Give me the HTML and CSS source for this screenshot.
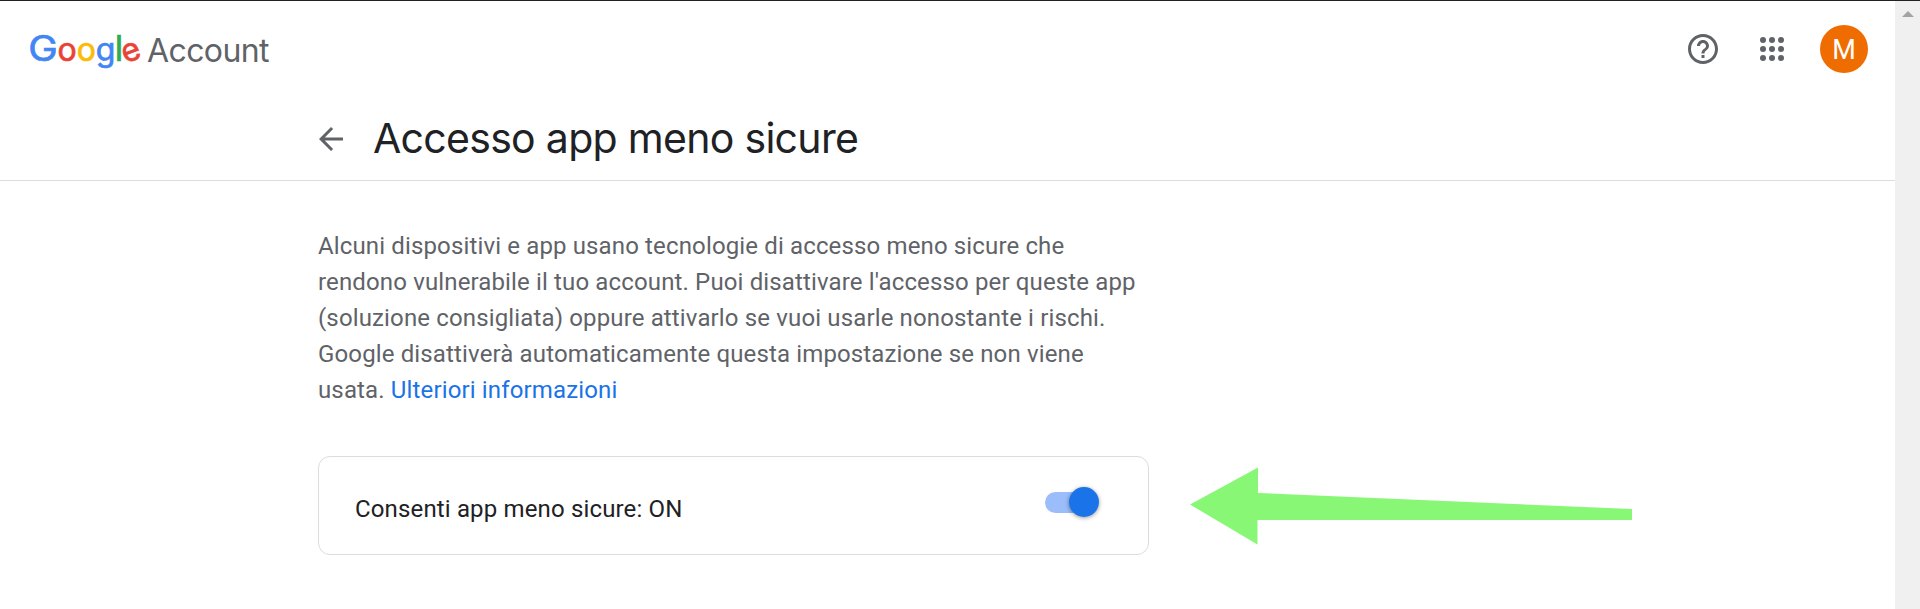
FILE: index.html
```html
<!DOCTYPE html>
<html lang="it">
<head>
<meta charset="utf-8">
<title>Accesso app meno sicure</title>
<link rel="stylesheet" href="styles.css">
</head>
<body>
<div class="window">
  <div class="page">
    <header class="header">
      <div class="topbar">
        <div class="brand">
          <svg class="logo" viewBox="0 0 112 50" role="img" aria-label="Google">
            <text class="blue capital" x="-1.7" y="36.500" textLength="29.500" lengthAdjust="spacingAndGlyphs">G</text>
            <text class="red" x="27.500" y="36.500">o</text>
            <text class="yellow" x="46.700" y="36.500">o</text>
            <text class="blue" x="65.700" y="36.500">g</text>
            <text class="green capital" x="84.700" y="36.500">l</text>
            <text class="red" x="91.500" y="36.500" transform="rotate(-20 101.500 27.500)">e</text>
          </svg>
          <span class="product">Account</span>
        </div>
        <div class="actions">
          <svg class="help" viewBox="0 0 24 24"><path d="M11 18h2v-2h-2v2zm1-16C6.480 2 2 6.480 2 12s4.480 10 10 10 10-4.480 10-10S17.520 2 12 2zm0 18c-4.410 0-8-3.590-8-8s3.590-8 8-8 8 3.590 8 8-3.590 8-8 8zm0-14c-2.210 0-4 1.790-4 4h2c0-1.100.9-2 2-2s2 .9 2 2c0 2-3 1.750-3 5h2c0-2.250 3-2.500 3-5 0-2.210-1.790-4-4-4z"/></svg>
          <svg class="apps" viewBox="0 0 24 24"><circle cx="3" cy="3" r="3"/><circle cx="12" cy="3" r="3"/><circle cx="21" cy="3" r="3"/><circle cx="3" cy="12" r="3"/><circle cx="12" cy="12" r="3"/><circle cx="21" cy="12" r="3"/><circle cx="3" cy="21" r="3"/><circle cx="12" cy="21" r="3"/><circle cx="21" cy="21" r="3"/></svg>
          <span class="avatar">M</span>
        </div>
      </div>
      <div class="titlebar">
        <svg class="back" viewBox="0 0 24 24"><path d="M20 11H7.830l5.590-5.590L12 4l-8 8 8 8 1.410-1.410L7.830 13H20v-2z"/></svg>
        <h1 class="title">Accesso app meno sicure</h1>
      </div>
    </header>
    <main class="content">
      <p class="description">Alcuni dispositivi e app usano tecnologie di accesso meno sicure che<br>rendono vulnerabile il tuo account. Puoi disattivare l'accesso per queste app<br>(soluzione consigliata) oppure attivarlo se vuoi usarle nonostante i rischi.<br>Google disattiverà automaticamente questa impostazione se non viene<br>usata. <a class="link">Ulteriori informazioni</a></p>
      <div class="row">
        <div class="card">
          <span class="label">Consenti app meno sicure: ON</span>
          <span class="switch"><span class="thumb"></span></span>
        </div>
        <svg class="arrow" viewBox="0 0 442 78"><path d="M0 37.500 68 0.500V26L442 42v11H67.500V77.500z"/></svg>
      </div>
    </main>
  </div>
  <div class="scrollbar"><span class="scroll-up"></span></div>
</div>
</body>
</html>
```
FILE: styles.css
```css
* { box-sizing: border-box; }
body { margin: 0; background: #fff; font-family: Roboto, sans-serif; overflow: hidden; }
.window { display: flex; height: 609px; border-top: 1px solid #202124; }
.page { flex: 1; }
.scrollbar { width: 25px; background: #f0f0f0; display: flex; justify-content: center; padding-top: 10px; }
.scroll-up { width: 0; height: 0; border: 6px solid transparent; border-top: 0; border-bottom-color: #a3a3a3; }

.header { height: 180px; border-bottom: 1px solid #dadce0; }
.topbar { height: 96px; display: flex; justify-content: space-between; align-items: center; padding: 0 27px 0 30px; }
.brand { display: flex; align-items: center; gap: 5px; }
.logo { width: 112px; height: 50px; overflow: visible; font: 32px Inter, sans-serif; }
.logo text { stroke-width: 0.7; }
.logo .capital { font-size: 35px; }
.blue { fill: #4285f4; stroke: #4285f4; }
.red { fill: #ea4335; stroke: #ea4335; }
.yellow { fill: #fbbc05; stroke: #fbbc05; }
.green { fill: #34a853; stroke: #34a853; }
.product { font: 32px/50px Inter, sans-serif; color: #5f6368; padding-top: 4px; letter-spacing: -0.6px; }
.actions { display: flex; align-items: center; }
.help { width: 36px; height: 36px; fill: #5f6368; margin-right: 39px; }
.apps { width: 24px; height: 24px; fill: #5f6368; margin-right: 36px; }
.avatar { width: 48px; height: 48px; border-radius: 50%; background: #ef6c00; color: #fff; font-size: 27px; line-height: 50px; text-align: center; }

.titlebar { display: flex; align-items: center; height: 83px; padding: 0 0 0 313px; gap: 24px; }
.back { width: 36px; height: 36px; fill: #5f6368; }
.title { margin: 0 0 2px; font: 400 41px/60px Inter, sans-serif; color: #202124; letter-spacing: -0.7px; }

.content { padding: 47px 0 0 318px; }
.description { margin: 0 0 48px; font-size: 24px; line-height: 36px; color: #5f6368; letter-spacing: 0.14px; }
.link { color: #1a73e8; }
.row { display: flex; align-items: flex-start; gap: 42px; }
.card { width: 831px; height: 99px; border: 1px solid #dadce0; border-radius: 12px; display: flex; justify-content: space-between; align-items: center; padding: 0 49px 0 36px; }
.label { font-size: 24px; line-height: 36px; color: #202124; letter-spacing: 0.15px; padding-top: 6px; }
.switch { width: 54px; height: 21px; border-radius: 11px; background: linear-gradient(90deg, #9bbdf9 0 40px, transparent 40px); display: flex; justify-content: flex-end; align-items: center; margin-bottom: 7px; }
.thumb { width: 30px; height: 30px; flex: none; border-radius: 50%; background: #1a73e8; box-shadow: 0 1px 4px rgba(0,0,0,.4); }
.arrow { width: 442px; height: 78px; margin: 11px 0 0 -1px; fill: #88f776; }
```
